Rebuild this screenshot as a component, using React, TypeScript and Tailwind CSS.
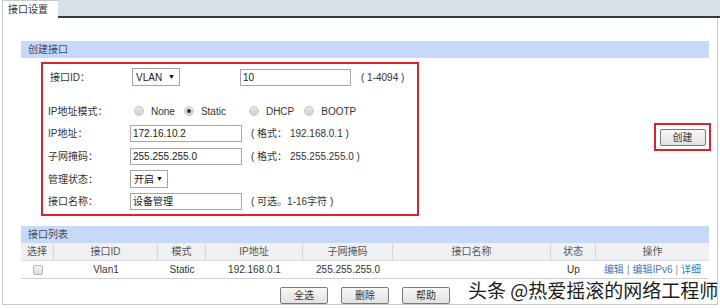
import React from "react";

function Radio({ checked }: { checked?: boolean }) {
  return (
    <span className="relative inline-flex h-[10px] w-[10px] items-center justify-center rounded-full border border-[#c8c8c8] bg-gradient-to-b from-[#e6e6e6] to-[#d2d2d2]">
      {checked && <span className="h-[4px] w-[4px] rounded-full bg-[#333]" />}
    </span>
  );
}

function Btn({ children, w = "w-[48px]" }: { children: React.ReactNode; w?: string }) {
  return (
    <div
      className={`${w} flex h-[17px] items-center justify-center rounded-[2px] border border-[#7a7a7a] bg-gradient-to-b from-[#f7f7f7] to-[#e2e2e2] text-[10px] text-[#333]`}
    >
      {children}
    </div>
  );
}

function Input({ value, w }: { value: string; w: string }) {
  return (
    <div className={`${w} flex h-[17px] items-center border border-[#a8a8a8] bg-white pl-[2px] text-[10px] text-[#222]`}>
      {value}
    </div>
  );
}

function Select({ value, w }: { value: string; w: string }) {
  return (
    <div className={`${w} flex h-[18px] items-center justify-between border border-[#a5a5a5] bg-white pl-[3px] pr-[4px] text-[10px] text-[#222]`}>
      <span>{value}</span>
      <span className="text-[7px] text-black">▼</span>
    </div>
  );
}

export default function App() {
  const cols = "grid grid-cols-[33px_104px_48px_97px_90px_158px_45px_113px]";
  return (
    <div className="relative h-[308px] w-[720px] overflow-hidden bg-white font-['Liberation_Sans','Noto_Sans_CJK_SC',sans-serif] text-[10px] text-[#333]">
      {/* tab strip */}
      <div className="flex h-[18px]">
        <div className="ml-[2px] flex w-[56px] items-center border-l border-t border-[#c9c9c9] bg-white pl-[5px] text-[10px] text-[#333]">
          接口设置
        </div>
        <div className="flex-1 border-b-[2px] border-[#2f3b47] bg-[#d9dfe7]" />
      </div>

      {/* panel */}
      <div className="mx-[2px] flex h-[287px] flex-col border-b border-l border-r border-[#c9c9c9] pl-[18px] pr-[8px] pt-[23px]">
        {/* section 1 header */}
        <div className="flex h-[17px] items-center bg-[#c6d9f8] pl-[7px] text-[#3e4a5a]">创建接口</div>

        <div className="flex h-[168px] items-start justify-between">
          {/* red box */}
          <div className="ml-[20px] mt-[4px] flex w-[378px] flex-col border-[2px] border-[#d8242e] pl-[5px] pt-[2px] pb-[2px]">
            <div className="flex h-[22px] items-center">
              <div className="w-[84px] pl-[2px]">接口ID：</div>
              <Select value="VLAN" w="w-[48px]" />
              <div className="ml-[60px]">
                <Input value="10" w="w-[111px]" />
              </div>
              <div className="ml-[10px]">( 1-4094 )</div>
            </div>
            <div className="h-[12px]" />
            <div className="flex h-[22px] items-center">
              <div className="w-[84px]">IP地址模式：</div>
              <div className="ml-[2px] flex items-center gap-[7px]">
                <Radio />
                <span>None</span>
              </div>
              <div className="ml-[9px] flex items-center gap-[7px]">
                <Radio checked />
                <span>Static</span>
              </div>
              <div className="ml-[23px] flex items-center gap-[7px]">
                <Radio />
                <span>DHCP</span>
              </div>
              <div className="ml-[10px] flex items-center gap-[7px]">
                <Radio />
                <span>BOOTP</span>
              </div>
            </div>
            <div className="flex h-[23px] items-center">
              <div className="w-[82px]">IP地址：</div>
              <Input value="172.16.10.2" w="w-[112px]" />
              <div className="ml-[9px]">( 格式： 192.168.0.1 )</div>
            </div>
            <div className="flex h-[23px] items-center">
              <div className="w-[82px]">子网掩码：</div>
              <Input value="255.255.255.0" w="w-[112px]" />
              <div className="ml-[9px]">( 格式： 255.255.255.0 )</div>
            </div>
            <div className="flex h-[22px] items-center">
              <div className="w-[82px]">管理状态：</div>
              <Select value="开启" w="w-[38px]" />
            </div>
            <div className="flex h-[22px] items-center">
              <div className="w-[82px]">接口名称：</div>
              <Input value="设备管理" w="w-[112px]" />
              <div className="ml-[9px]">( 可选。1-16字符 )</div>
            </div>
          </div>

          {/* create button */}
          <div className="mr-[-2px] mt-[65px] flex h-[28px] w-[57px] items-center justify-center border-[2px] border-[#d8242e]">
            <Btn w="w-[46px]">创建</Btn>
          </div>
        </div>

        {/* section 2 header */}
        <div className="flex h-[17px] items-center bg-[#c6d9f8] pl-[7px] text-[#3e4a5a]">接口列表</div>

        {/* table header */}
        <div className={`${cols} h-[18px] border-b border-[#dcdcdc] bg-[#eff0f2] text-[#555]`}>
          {["选择", "接口ID", "模式", "IP地址", "子网掩码", "接口名称", "状态", "操作"].map((h, i) => (
            <div
              key={h}
              className={`flex items-center justify-center ${i < 7 ? "border-r border-[#d6d6d6]" : ""}`}
            >
              {h}
            </div>
          ))}
        </div>

        {/* data row */}
        <div className={`${cols} h-[18px] border-b border-[#cfcfcf] text-[#333]`}>
          <div className="flex items-center justify-center">
            <span className="h-[10px] w-[10px] rounded-[2px] border border-[#b5b5b5] bg-gradient-to-b from-[#f2f2f2] to-[#dcdcdc]" />
          </div>
          <div className="flex items-center justify-center">Vlan1</div>
          <div className="flex items-center justify-center">Static</div>
          <div className="flex items-center justify-center">192.168.0.1</div>
          <div className="flex items-center justify-center">255.255.255.0</div>
          <div />
          <div className="flex items-center justify-center">Up</div>
          <div className="flex items-center justify-center gap-[3px] text-[#3d78c0]">
            <span>编辑</span>
            <span className="text-[#888]">|</span>
            <span>编辑IPv6</span>
            <span className="text-[#888]">|</span>
            <span>详细</span>
          </div>
        </div>

        {/* buttons */}
        <div className="mt-[8px] flex justify-center gap-[13px]">
          <Btn>全选</Btn>
          <Btn>删除</Btn>
          <Btn>帮助</Btn>
        </div>
      </div>

      {/* watermark */}
      <div className="absolute left-[468px] top-[280px] font-['Noto_Sans_CJK_SC',sans-serif] text-[19px] leading-none text-[#1c1c1c] [text-shadow:0_0_2px_#fff,0_0_2px_#fff]">
        头条 @热爱摇滚的网络工程师
      </div>
    </div>
  );
}
